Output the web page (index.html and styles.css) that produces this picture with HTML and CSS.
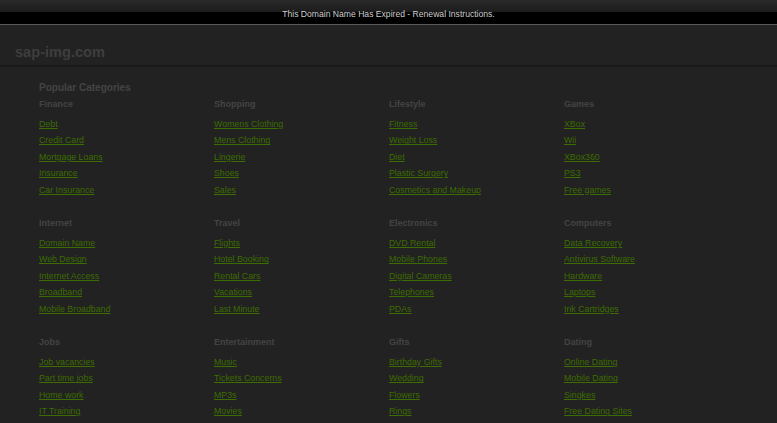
FILE: index.html
```html
<!DOCTYPE html>
<html lang="en">
<head>
    <meta charset="UTF-8">
    <title>sap-img.com</title>
    <link rel="stylesheet" href="styles.css">
</head>
<body>
    <div class="topbar">
        <a href="#">This Domain Name Has Expired - Renewal Instructions.</a>
    </div>

    <div class="header">
        <span class="logo">sap-img.com</span>
    </div>

    <div class="content">
        <h2>Popular Categories</h2>
        <div class="grid">
            <div class="cat">
                <h3>Finance</h3>
                <ul>
                    <li><a href="#">Debt</a></li>
                    <li><a href="#">Credit Card</a></li>
                    <li><a href="#">Mortgage Loans</a></li>
                    <li><a href="#">Insurance</a></li>
                    <li><a href="#">Car Insurance</a></li>
                </ul>
            </div>
            <div class="cat">
                <h3>Shopping</h3>
                <ul>
                    <li><a href="#">Womens Clothing</a></li>
                    <li><a href="#">Mens Clothing</a></li>
                    <li><a href="#">Lingerie</a></li>
                    <li><a href="#">Shoes</a></li>
                    <li><a href="#">Sales</a></li>
                </ul>
            </div>
            <div class="cat">
                <h3>Lifestyle</h3>
                <ul>
                    <li><a href="#">Fitness</a></li>
                    <li><a href="#">Weight Loss</a></li>
                    <li><a href="#">Diet</a></li>
                    <li><a href="#">Plastic Surgery</a></li>
                    <li><a href="#">Cosmetics and Makeup</a></li>
                </ul>
            </div>
            <div class="cat">
                <h3>Games</h3>
                <ul>
                    <li><a href="#">XBox</a></li>
                    <li><a href="#">Wii</a></li>
                    <li><a href="#">XBox360</a></li>
                    <li><a href="#">PS3</a></li>
                    <li><a href="#">Free games</a></li>
                </ul>
            </div>

            <div class="cat">
                <h3>Internet</h3>
                <ul>
                    <li><a href="#">Domain Name</a></li>
                    <li><a href="#">Web Design</a></li>
                    <li><a href="#">Internet Access</a></li>
                    <li><a href="#">Broadband</a></li>
                    <li><a href="#">Mobile Broadband</a></li>
                </ul>
            </div>
            <div class="cat">
                <h3>Travel</h3>
                <ul>
                    <li><a href="#">Flights</a></li>
                    <li><a href="#">Hotel Booking</a></li>
                    <li><a href="#">Rental Cars</a></li>
                    <li><a href="#">Vacations</a></li>
                    <li><a href="#">Last Minute</a></li>
                </ul>
            </div>
            <div class="cat">
                <h3>Electronics</h3>
                <ul>
                    <li><a href="#">DVD Rental</a></li>
                    <li><a href="#">Mobile Phones</a></li>
                    <li><a href="#">Digital Cameras</a></li>
                    <li><a href="#">Telephones</a></li>
                    <li><a href="#">PDAs</a></li>
                </ul>
            </div>
            <div class="cat">
                <h3>Computers</h3>
                <ul>
                    <li><a href="#">Data Recovery</a></li>
                    <li><a href="#">Antivirus Software</a></li>
                    <li><a href="#">Hardware</a></li>
                    <li><a href="#">Laptops</a></li>
                    <li><a href="#">Ink Cartridges</a></li>
                </ul>
            </div>

            <div class="cat">
                <h3>Jobs</h3>
                <ul>
                    <li><a href="#">Job vacancies</a></li>
                    <li><a href="#">Part time jobs</a></li>
                    <li><a href="#">Home work</a></li>
                    <li><a href="#">IT Training</a></li>
                </ul>
            </div>
            <div class="cat">
                <h3>Entertainment</h3>
                <ul>
                    <li><a href="#">Music</a></li>
                    <li><a href="#">Tickets Concerns</a></li>
                    <li><a href="#">MP3s</a></li>
                    <li><a href="#">Movies</a></li>
                </ul>
            </div>
            <div class="cat">
                <h3>Gifts</h3>
                <ul>
                    <li><a href="#">Birthday Gifts</a></li>
                    <li><a href="#">Wedding</a></li>
                    <li><a href="#">Flowers</a></li>
                    <li><a href="#">Rings</a></li>
                </ul>
            </div>
            <div class="cat">
                <h3>Dating</h3>
                <ul>
                    <li><a href="#">Online Dating</a></li>
                    <li><a href="#">Mobile Dating</a></li>
                    <li><a href="#">Singkes</a></li>
                    <li><a href="#">Free Dating Sites</a></li>
                </ul>
            </div>
        </div>
    </div>
</body>
</html>
```

FILE: styles.css
```css
body {
    margin: 0;
    background: #222;
    font-family: "Liberation Sans", Arial, sans-serif;
    overflow: hidden;
}
.topbar {
    height: 24px;
    line-height: 24px;
    text-align: center;
    background: linear-gradient(#2a2a2a, #1c1c1c 50%, #000 52%, #000);
    border-bottom: 1px solid #5a5a5a;
}
.topbar a {
    color: #cfcfcf;
    font-size: 8.6px;
    text-decoration: none;
}
.header {
    height: 40px;
    border-bottom: 2px solid #1a1a1a;
}
.logo {
    display: block;
    padding: 17px 0 0 15px;
    font-size: 14.6px;
    font-weight: bold;
    line-height: 20px;
    color: #3e3e3e;
}
.content {
    padding: 15px 0 0 39px;
}
h2 {
    margin: 0 0 4px;
    font-size: 10px;
    line-height: 12px;
    color: #444;
}
.grid {
    display: grid;
    grid-template-columns: repeat(4, 175px);
}
.cat {
    height: 119px;
}
h3 {
    margin: 0;
    font-size: 9px;
    line-height: 12px;
    color: #444;
}
ul {
    list-style: none;
    margin: 6px 0 0;
    padding: 0;
}
li {
    font-size: 8.8px;
    line-height: 16.4px;
}
li a {
    color: #3d6c00;
}
```
